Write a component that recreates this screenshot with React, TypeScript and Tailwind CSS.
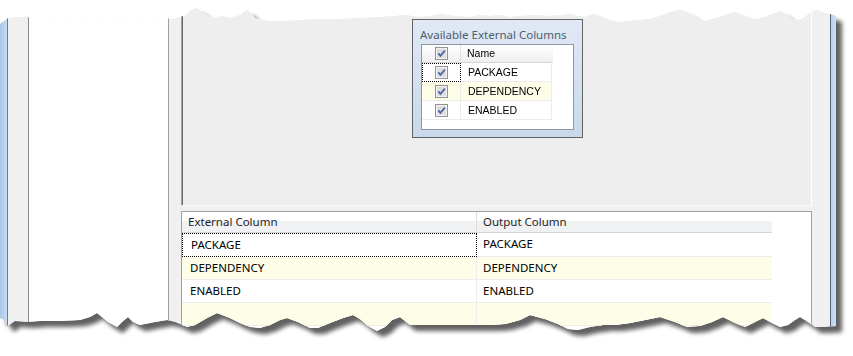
import React from 'react';

// torn paper outline (top edge left->right, bottom edge right->left)
const TORN =
  '0,24 4,21 8,18 14,17 22,17 26,16 30,18 40,18 60,19 75,18 78,19 90,18 110,19 116,18 130,19 150,20 165,18 172,19 180,17 186,15 190,11 196,8 200,10 205,14 210,17 215,18 222,16 230,18 240,15 246,10 250,12 255,18 262,20 270,21 285,21 300,20 320,19 340,19 360,18 380,17 395,16 405,15 412,16 420,17 430,16 440,14 455,16 470,17 480,15 490,16 500,15 510,17 520,16 535,15 550,16 560,15 570,14 578,16 585,17 593,14 600,16 610,21 620,22 630,21 640,20 650,19 660,16 670,12 678,10 685,11 692,15 698,19 705,21 712,19 720,17 728,14 735,12 740,14 748,18 755,19 765,17 772,14 780,11 786,14 792,19 800,20 806,16 812,11 818,10 825,13 830,14 836,16 ' +
  '836,326 825,327 815,327 808,322 800,317 795,320 788,325 780,327 772,323 763,318 755,322 745,327 735,323 723,317 712,322 700,326 687,327 675,322 660,317 645,320 630,323 615,325 603,325 590,327 578,330 568,329 558,324 545,319 530,315 520,320 505,324 490,325 470,325 450,325 430,325 410,325 400,317 392,320 385,327 377,331 368,326 360,319 353,315 343,318 330,323 318,328 310,328 298,322 287,318 280,320 270,325 260,328 250,327 240,323 230,318 217,313 207,318 195,325 187,327 175,322 167,320 155,322 140,325 133,322 128,317 122,322 117,327 108,322 97,313 90,317 80,320 60,321 40,321 25,322 15,321 8,326 4,320 0,318';

const rows = ['PACKAGE', 'DEPENDENCY', 'ENABLED'];

function CheckBox() {
  return (
    <svg width="13" height="13" viewBox="0 0 13 13">
      <rect x="0.5" y="0.5" width="12" height="12" fill="#f3f3f3" stroke="#939393" />
      <rect x="2" y="2" width="9" height="9" fill="#dedede" />
      <path d="M3.3 6.4 L5.4 8.9 L9.9 3.6" fill="none" stroke="#4d63a8" strokeWidth="1.7" />
    </svg>
  );
}

function AvailableColumns() {
  return (
    <div className="absolute left-[230px] top-[19px] flex h-[119px] w-[171px] flex-col border border-[#646464] bg-gradient-to-b from-[#e0e9f5] to-[#c9d8ea] px-[8px] pb-[7px]">
      <div className="-ml-[1px] h-[24px] whitespace-nowrap pt-[7px] font-['Noto_Sans',sans-serif] text-[11.5px] leading-[16px] text-[#4d5c6e]">
        Available External Columns
      </div>
      <div className="flex-1 border border-[#8e98a5] bg-white font-['Liberation_Sans',Arial,sans-serif] text-[10.5px] text-black">
        <div className="flex h-[18px] w-[131px] border-b border-[#d5d5d5] bg-gradient-to-b from-white to-[#efefef]">
          <div className="flex w-[39px] items-center justify-center border-r border-[#e2e2e2]">
            <CheckBox />
          </div>
          <div className="flex-1 pl-[6px] leading-[17px]">Name</div>
        </div>
        {rows.map((r, i) => (
          <div
            key={r}
            className={`flex h-[19px] w-[130px] ${i === 1 ? 'bg-[#fefee8]' : 'bg-white'}`}
          >
            <div
              className={`flex w-[39px] items-center justify-center border-r border-b ${
                i === 0 ? 'border border-dotted border-black' : 'border-[#ececec]'
              }`}
            >
              <CheckBox />
            </div>
            <div className="flex-1 border-b border-r border-[#ececec] pl-[7px] leading-[18px]">{r}</div>
          </div>
        ))}
      </div>
    </div>
  );
}

function MappingGrid() {
  return (
    <div className="flex-1 border border-b-0 border-[#a0a0a0] bg-white font-['Noto_Sans',sans-serif] text-[11.5px] text-black">
      <div className="flex h-[21px] w-[590px] border-b border-[#d5d5d5] bg-[linear-gradient(to_bottom,#ffffff_0%,#ffffff_45%,#f0f1f3_45%,#f0f1f3_100%)] text-[#1e1e1e]">
        <div className="w-[295px] border-r border-[#dedede] pl-[6px] leading-[19px]">External Column</div>
        <div className="w-[295px] pl-[6px] leading-[19px]">Output Column</div>
      </div>
      {[...rows, ''].map((r, i) => (
        <div
          key={i}
          className={`flex w-[590px] ${i === 0 ? 'h-[24px]' : 'h-[23px]'} ${
            i % 2 === 1 ? 'bg-[#fefee8]' : 'bg-white'
          }`}
        >
          <div
            className={`w-[295px] pl-[8px] leading-[21px] ${
              i === 0 ? 'border border-dotted border-black' : 'border-r border-b border-[#ededed]'
            }`}
          >
            {r}
          </div>
          <div className="w-[295px] border-b border-[#ededed] pl-[6px] leading-[22px]">{r}</div>
        </div>
      ))}
    </div>
  );
}

export default function App() {
  return (
    <div className="h-[356px] w-[853px] overflow-hidden bg-white">
      <svg width="0" height="0" className="absolute">
        <defs>
          <clipPath id="torn" clipPathUnits="userSpaceOnUse">
            <polygon points={TORN} />
          </clipPath>
        </defs>
      </svg>
      <div className="w-[836px] [filter:drop-shadow(6px_6px_2px_rgba(0,0,0,0.62))]">
        <div className="flex h-[340px] w-[836px] bg-[#f0f0f0] [clip-path:url(#torn)]">
          <div className="w-[7px] bg-gradient-to-r from-[#a9c6e6] to-[#c6dcf3]" />
          <div className="w-px bg-[#6a7a8c]" />
          <div className="w-[20px]" />
          <div className="w-[141px] border-l border-r border-l-[#8a8a8a] border-r-[#a0a0a0] bg-white" />
          <div className="w-[12px]" />
          <div className="flex w-[631px] flex-col">
            <div className="relative h-[206px] border-b border-l border-r border-b-[#fbfbfb] border-l-[#a0a0a0] border-r-white bg-[#eeeeee]">
              <div className="h-full border-l border-[#6b6b6b]" />
              <AvailableColumns />
            </div>
            <div className="h-[5px]" />
            <MappingGrid />
          </div>
          <div className="w-[18px]" />
          <div className="w-px bg-[#56657a]" />
          <div className="w-[5px] bg-gradient-to-r from-[#b5d1ef] to-[#cadff5]" />
        </div>
      </div>
    </div>
  );
}
